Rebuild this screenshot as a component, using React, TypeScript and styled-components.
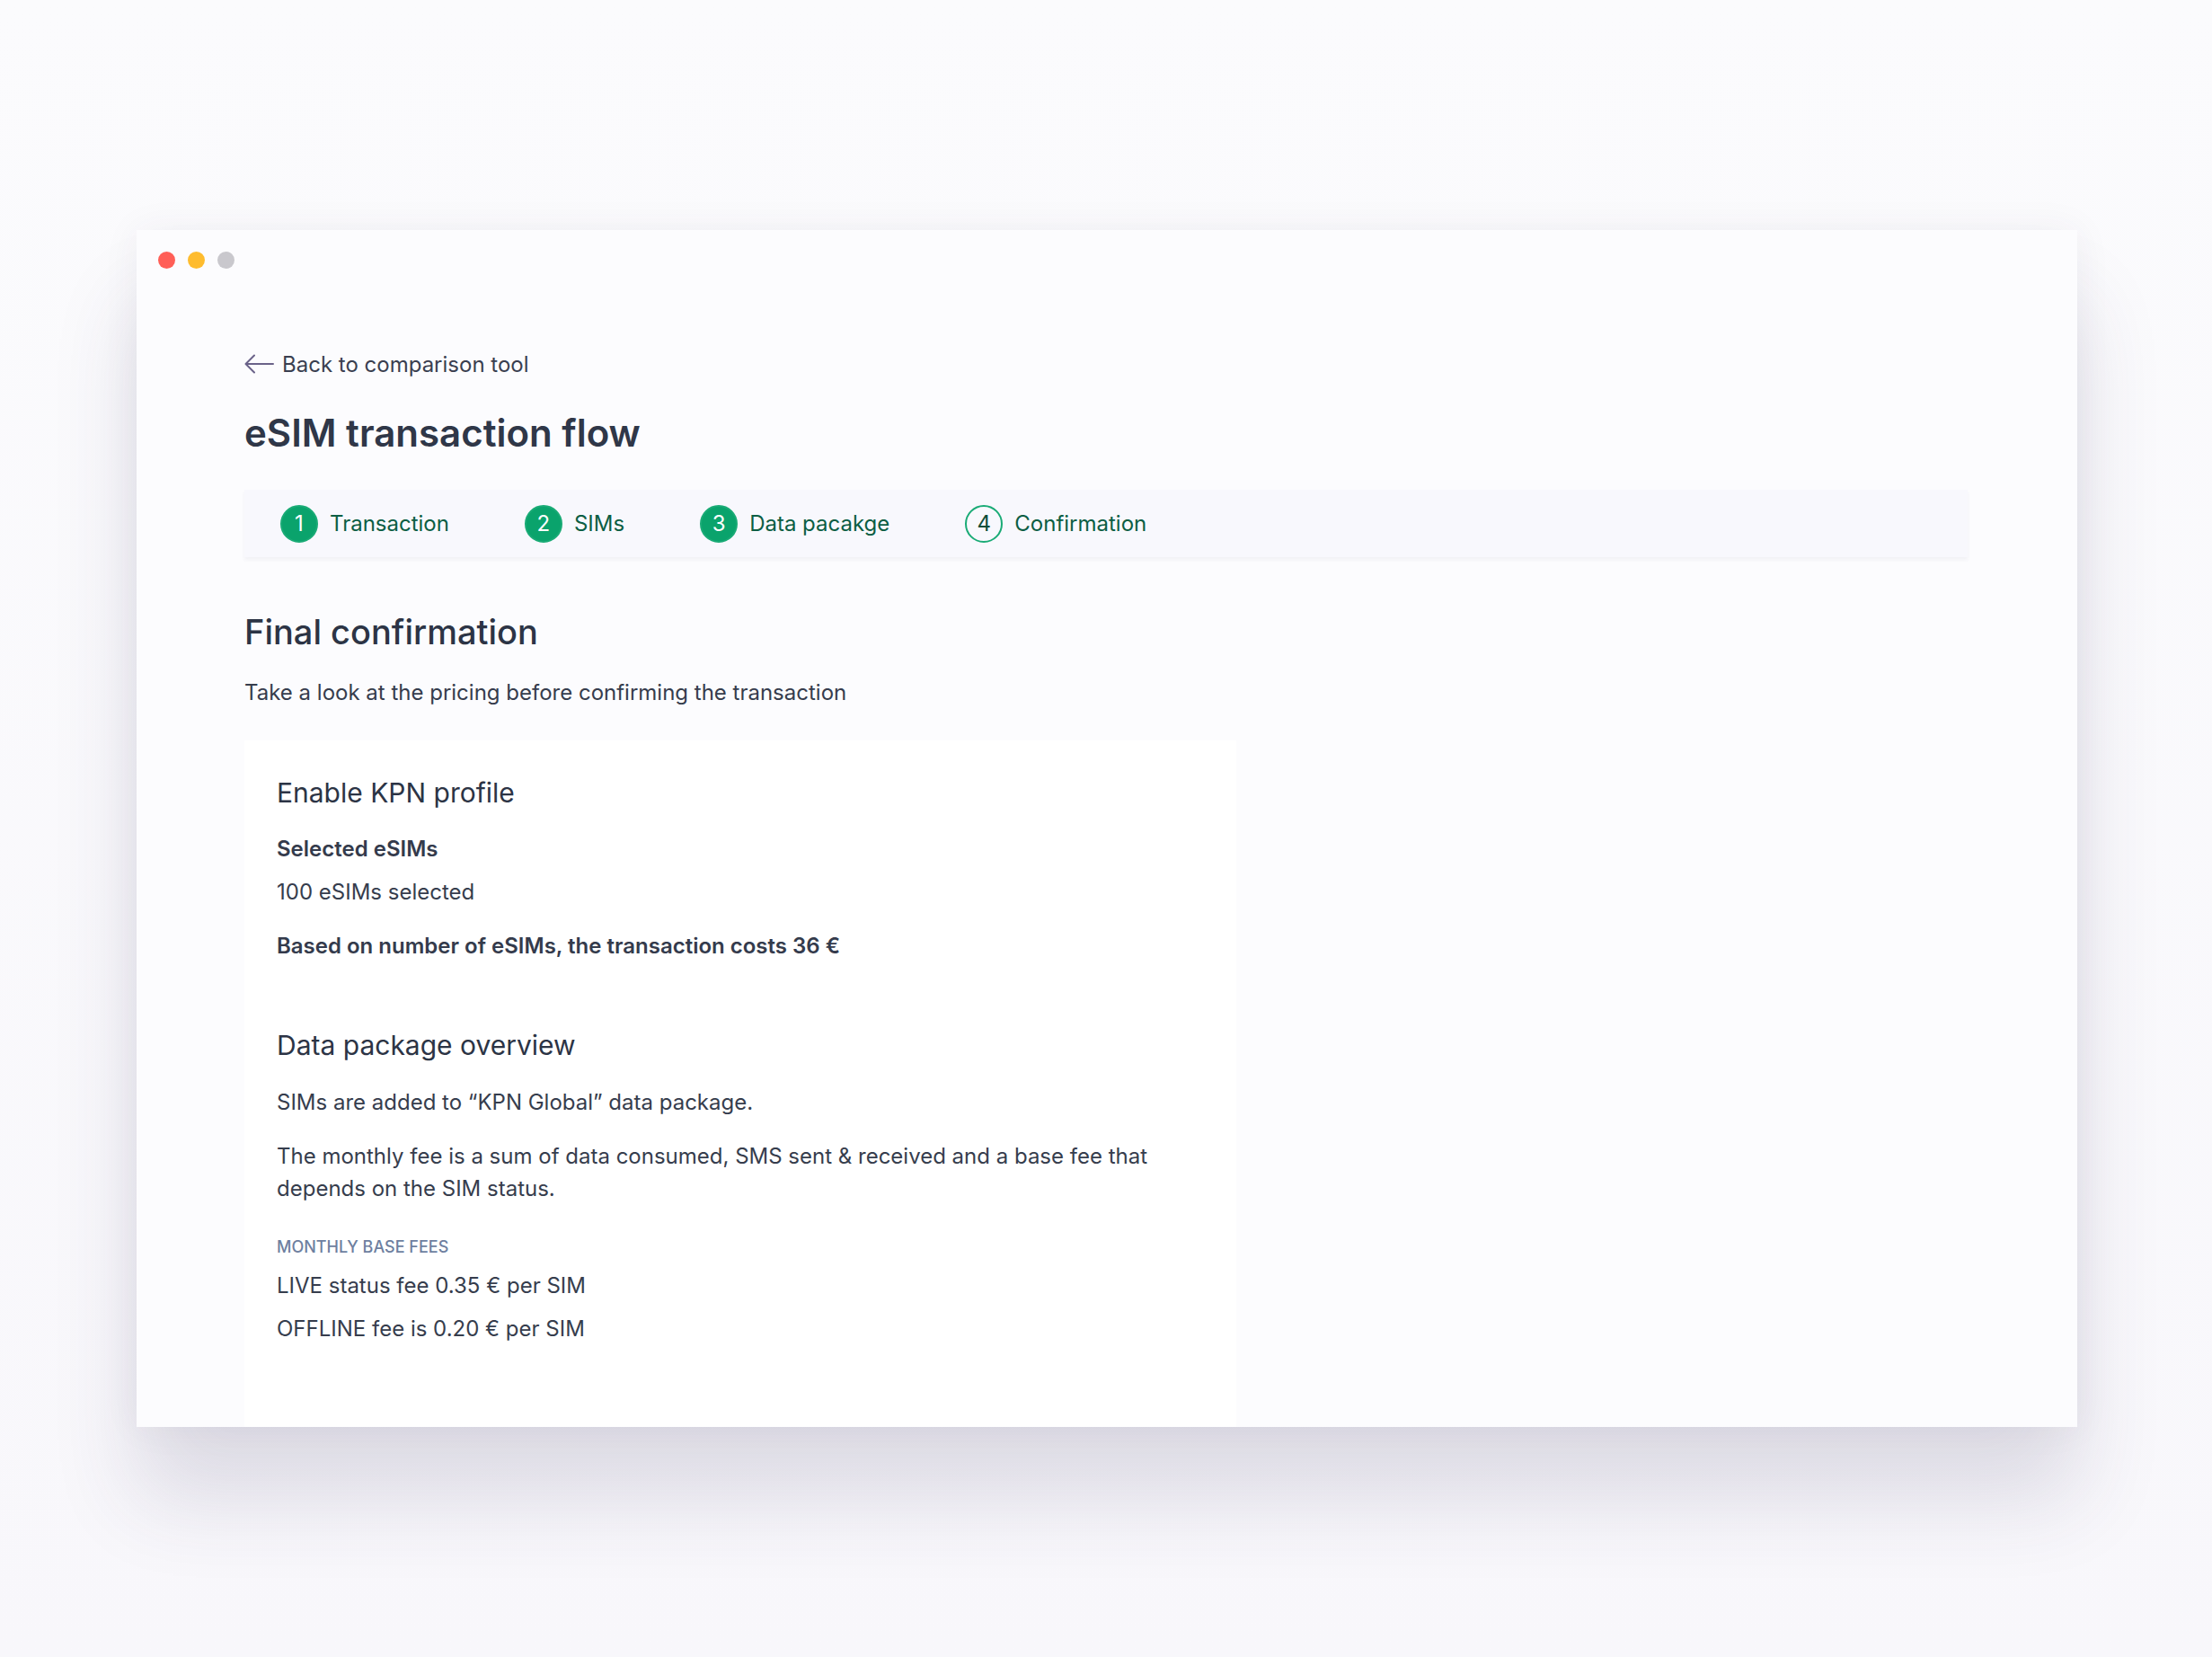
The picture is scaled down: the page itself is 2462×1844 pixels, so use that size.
import { createGlobalStyle, styled } from 'styled-components';

const GlobalStyle = createGlobalStyle`
  html, body {
    margin: 0;
    padding: 0;
    background: #f8f7fb;
  }
  body {
    font-family: Inter, "Noto Sans", "Liberation Sans", sans-serif;
    color: #363d4d;
  }
  * {
    box-sizing: border-box;
  }
`;

type Step = {
  id: number;
  label: string;
  done: boolean;
};

const steps: Step[] = [
  { id: 1, label: 'Transaction', done: true },
  { id: 2, label: 'SIMs', done: true },
  { id: 3, label: 'Data pacakge', done: true },
  { id: 4, label: 'Confirmation', done: false },
];

function BackArrow() {
  return (
    <svg width="33" height="22" viewBox="0 0 33 22" fill="none">
      <path
        d="M32 11H2M11 1.5L1.5 11L11 20.5"
        stroke="#6a6289"
        strokeWidth="2"
        strokeLinecap="round"
        strokeLinejoin="round"
      />
    </svg>
  );
}

export default function App() {
  return (
    <>
      <GlobalStyle />
      <Page>
        <Window>
          <TitleBar>
            <Dot $color="#ff5f57" />
            <Dot $color="#febc2e" />
            <Dot $color="#c9c8cd" />
          </TitleBar>
          <Content>
            <BackLink>
              <BackArrow />
              <span>Back to comparison tool</span>
            </BackLink>
            <PageTitle>eSIM transaction flow</PageTitle>
            <Stepper>
              {steps.map(step => (
                <StepItem key={step.id}>
                  <StepCircle $done={step.done}>{step.id}</StepCircle>
                  <StepLabel>{step.label}</StepLabel>
                </StepItem>
              ))}
            </Stepper>
            <SectionTitle>Final confirmation</SectionTitle>
            <Subtitle>Take a look at the pricing before confirming the transaction</Subtitle>
            <Card>
              <CardTitle>Enable KPN profile</CardTitle>
              <Strong $gap={29}>Selected eSIMs</Strong>
              <Text $gap={16}>100 eSIMs selected</Text>
              <Strong $gap={28}>Based on number of eSIMs, the transaction costs 36 €</Strong>

              <CardTitle $gap={76}>Data package overview</CardTitle>
              <Text $gap={30}>SIMs are added to “KPN Global” data package.</Text>
              <Paragraph>
                The monthly fee is a sum of data consumed, SMS sent &amp; received and a base fee that
                depends on the SIM status.
              </Paragraph>
              <Caption>MONTHLY BASE FEES</Caption>
              <Text $gap={15}>LIVE status fee 0.35 € per SIM</Text>
              <Text $gap={16}>OFFLINE fee is 0.20 € per SIM</Text>
            </Card>
          </Content>
        </Window>
      </Page>
    </>
  );
}

const Page = styled.div`
  width: 2462px;
  height: 1844px;
  padding: 256px 150px 0 152px;
  background: linear-gradient(180deg, #fbfbfd 0%, #f8f7fb 100%);
  overflow: hidden;
`;

const Window = styled.div`
  width: 2160px;
  height: 1332px;
  background: #fcfcfe;
  overflow: hidden;
  box-shadow:
    0 80px 90px rgba(60, 50, 90, 0.14),
    0 0 40px rgba(60, 50, 90, 0.06);
`;

const TitleBar = styled.div`
  display: flex;
  gap: 14px;
  padding: 24px 0 0 24px;
`;

const Dot = styled.div<{ $color: string }>`
  width: 19px;
  height: 19px;
  border-radius: 50%;
  background: ${({ $color }) => $color};
`;

const Content = styled.div`
  padding: 91px 122px 0 120px;
  display: flex;
  flex-direction: column;
  align-items: flex-start;
`;

const BackLink = styled.div`
  display: flex;
  align-items: center;
  gap: 9px;
  height: 30px;
  font-size: 24px;
  color: #3a3f50;
`;

const PageTitle = styled.h1`
  margin: 39px 0 0;
  font-size: 42px;
  line-height: 46px;
  font-weight: 600;
  color: #2f3748;
`;

const Stepper = styled.div`
  margin-top: 40px;
  width: 100%;
  height: 75px;
  display: flex;
  align-items: center;
  gap: 84px;
  padding-left: 40px;
  background: #f8f8fd;
  box-shadow: 0 3px 4px rgba(60, 60, 100, 0.06);
`;

const StepItem = styled.div`
  display: flex;
  align-items: center;
  gap: 13px;
`;

const StepCircle = styled.div<{ $done: boolean }>`
  width: 42px;
  height: 42px;
  border-radius: 50%;
  display: flex;
  justify-content: center;
  align-items: center;
  font-size: 24px;
  background: ${({ $done }) => ($done ? '#0aa36c' : 'transparent')};
  border: 2px solid #1aab76;
  color: ${({ $done }) => ($done ? '#ffffff' : '#0f4d39')};
`;

const StepLabel = styled.div`
  font-size: 24px;
  color: #0c5e44;
`;

const SectionTitle = styled.h2`
  margin: 61px 0 0;
  font-size: 38px;
  line-height: 44px;
  font-weight: 500;
  color: #2c3445;
`;

const Subtitle = styled.p`
  margin: 30px 0 0;
  font-size: 24px;
  line-height: 32px;
  color: #363d4d;
`;

const Card = styled.div`
  margin-top: 37px;
  width: 1104px;
  min-height: 800px;
  padding: 40px 36px 0;
  background: #ffffff;
`;

const CardTitle = styled.h3<{ $gap?: number }>`
  margin: ${({ $gap }) => $gap ?? 0}px 0 0;
  font-size: 30px;
  line-height: 36px;
  font-weight: 400;
  color: #2c3445;
`;

const Text = styled.div<{ $gap: number }>`
  margin-top: ${({ $gap }) => $gap}px;
  font-size: 24px;
  line-height: 32px;
  color: #363d4d;
`;

const Strong = styled(Text)`
  font-weight: 600;
  color: #343b4c;
`;

const Paragraph = styled.p`
  margin: 26px 0 0;
  max-width: 1000px;
  font-size: 24px;
  line-height: 36px;
  color: #363d4d;
`;

const Caption = styled.div`
  margin-top: 35px;
  font-size: 18px;
  line-height: 24px;
  font-weight: 500;
  color: #6e7fa0;
`;
